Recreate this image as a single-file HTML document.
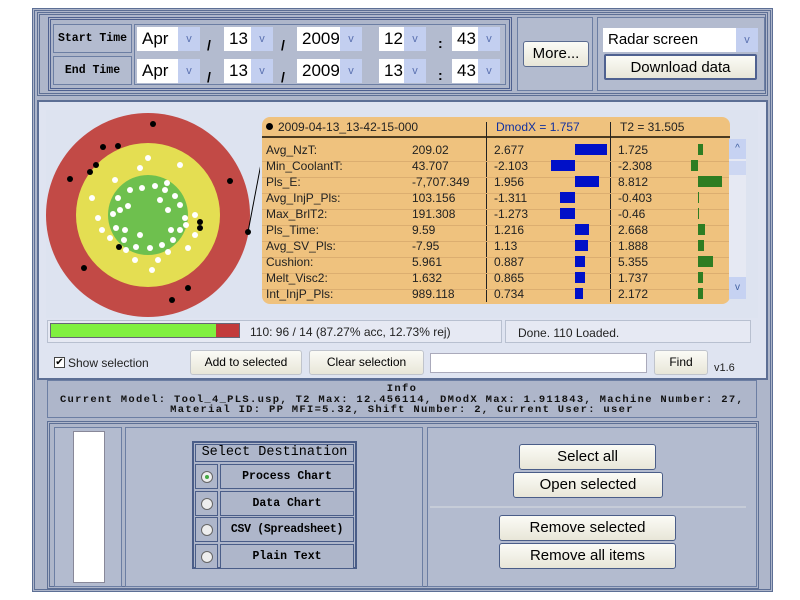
<!DOCTYPE html><html><head><style>
*{box-sizing:border-box;margin:0;padding:0}
body{width:800px;height:600px;background:#fff;position:relative;overflow:hidden;font-family:"Liberation Sans",sans-serif}
.a{position:absolute}
.fr{position:absolute;border:2px solid #5d6f95;background:#aeb6ca}
.in{position:absolute;border:1px solid #6c7ea3;background:#b3bbcf}
.mono{font-family:"Liberation Mono",monospace;font-weight:bold}
.sel{position:absolute;background:#fff;height:24px;font-size:17px;line-height:24px;padding-left:5px;color:#000}
.sel i{position:absolute;right:0;top:0;width:22px;height:24px;background:#c3cff0;font-style:normal;font-size:11px;color:#5a70b0;text-align:center;line-height:24px}
.btn{position:absolute;background:linear-gradient(#fbfbf6,#e8e6d8);border:1px solid #7a879f;border-radius:3px;text-align:center;color:#000}
.row{position:absolute;left:0;width:468px;height:24px;font-size:12px;line-height:24px;color:#222;border-bottom:1px solid #dcae70}
.row span{position:absolute}
.bb{position:absolute;top:6px;height:11px;background:#0010c8}
.gb{position:absolute;top:6px;height:11px;background:#2e7d22}
.rad{position:absolute;border:1px solid #4a5d88;background:#aeb6ca}
.sl{position:absolute;font-size:14px;font-weight:bold}
</style></head><body>
<div class="a" style="left:32px;top:8px;width:741px;height:584px;border:3px double #5d6f95;background:#aeb6ca"></div>
<div class="fr" style="left:37px;top:12px;width:731px;height:84px;border:3px double #5d6f95"></div>
<div class="a" style="left:48px;top:17px;width:464px;height:74px;border:3px double #4f6190;background:#aeb6ca"></div>
<div class="in mono" style="left:53px;top:24px;width:79px;height:29px;font-size:11.5px;line-height:27px;text-align:center;white-space:nowrap">Start Time</div>
<div class="in mono" style="left:53px;top:56px;width:79px;height:29px;font-size:11.5px;line-height:27px;text-align:center">End Time</div>
<div class="in" style="left:134px;top:24px;width:372px;height:61px"></div>
<div class="sel" style="left:137px;top:27px;width:63px">Apr<i>v</i></div>
<div class="sel" style="left:224px;top:27px;width:49px">13<i>v</i></div>
<div class="sel" style="left:297px;top:27px;width:65px">2009<i>v</i></div>
<div class="sel" style="left:379px;top:27px;width:47px">12<i>v</i></div>
<div class="sel" style="left:452px;top:27px;width:48px">43<i>v</i></div>
<div class="sel" style="left:137px;top:59px;width:63px">Apr<i>v</i></div>
<div class="sel" style="left:224px;top:59px;width:49px">13<i>v</i></div>
<div class="sel" style="left:297px;top:59px;width:65px">2009<i>v</i></div>
<div class="sel" style="left:379px;top:59px;width:47px">13<i>v</i></div>
<div class="sel" style="left:452px;top:59px;width:48px">43<i>v</i></div>
<div class="sl" style="left:207px;top:37px">/</div>
<div class="sl" style="left:281px;top:37px">/</div>
<div class="sl" style="left:207px;top:69px">/</div>
<div class="sl" style="left:281px;top:69px">/</div>
<div class="sl" style="left:438px;top:35px">:</div>
<div class="sl" style="left:438px;top:67px">:</div>
<div class="in" style="left:517px;top:17px;width:76px;height:74px"></div>
<div class="btn" style="left:523px;top:41px;width:66px;height:26px;font-size:15px;line-height:24px;border-color:#5a6b90">More...</div>
<div class="in" style="left:597px;top:17px;width:168px;height:74px"></div>
<div class="sel" style="left:603px;top:28px;width:155px;font-size:15px">Radar screen<i>v</i></div>
<div class="btn" style="left:604px;top:54px;width:153px;height:26px;font-size:15px;line-height:24px;border:2px solid #4f6190;border-radius:2px">Download data</div>
<div class="a" style="left:37px;top:100px;width:731px;height:280px;border:2px solid #5d6f95;background:#dfe4f1"></div>
<div class="a" style="left:46px;top:110px;width:712px;height:208px;background:#dde3f0"></div>
<svg class="a" style="left:40px;top:110px" width="220" height="210">
<circle cx="108" cy="105" r="102" fill="#c24a46"/>
<circle cx="108" cy="105" r="72" fill="#e4de52"/>
<circle cx="108" cy="105" r="40" fill="#6ec04e"/>
<g fill="#fff">
<circle cx="78" cy="88" r="3"/><circle cx="90" cy="80" r="3"/><circle cx="102" cy="78" r="3"/><circle cx="115" cy="76" r="3"/><circle cx="125" cy="80" r="3"/><circle cx="135" cy="86" r="3"/><circle cx="140" cy="95" r="3"/><circle cx="145" cy="108" r="3"/><circle cx="140" cy="120" r="3"/><circle cx="133" cy="130" r="3"/><circle cx="122" cy="135" r="3"/><circle cx="110" cy="138" r="3"/><circle cx="96" cy="137" r="3"/><circle cx="84" cy="130" r="3"/><circle cx="76" cy="118" r="3"/><circle cx="73" cy="104" r="3"/><circle cx="80" cy="100" r="3"/><circle cx="128" cy="100" r="3"/><circle cx="58" cy="108" r="3"/><circle cx="52" cy="88" r="3"/><circle cx="75" cy="70" r="3"/><circle cx="108" cy="48" r="3"/><circle cx="140" cy="55" r="3"/><circle cx="155" cy="105" r="3"/><circle cx="155" cy="125" r="3"/><circle cx="100" cy="58" r="3"/><circle cx="118" cy="150" r="3"/><circle cx="95" cy="150" r="3"/><circle cx="85" cy="120" r="3"/><circle cx="128" cy="142" r="3"/><circle cx="148" cy="138" r="3"/><circle cx="70" cy="128" r="3"/><circle cx="112" cy="160" r="3"/><circle cx="120" cy="90" r="3"/><circle cx="88" cy="96" r="3"/><circle cx="100" cy="125" r="3"/><circle cx="146" cy="115" r="3"/><circle cx="131" cy="120" r="3"/><circle cx="127" cy="73" r="3"/><circle cx="86" cy="140" r="3"/><circle cx="62" cy="120" r="3"/>
</g>
<g fill="#000">
<circle cx="113" cy="14" r="3"/><circle cx="63" cy="37" r="3"/><circle cx="78" cy="36" r="3"/><circle cx="56" cy="55" r="3"/><circle cx="50" cy="62" r="3"/><circle cx="30" cy="69" r="3"/><circle cx="190" cy="71" r="3"/><circle cx="160" cy="112" r="3"/><circle cx="160" cy="118" r="3"/><circle cx="208" cy="122" r="3"/><circle cx="79" cy="137" r="3"/><circle cx="44" cy="158" r="3"/><circle cx="148" cy="178" r="3"/><circle cx="132" cy="190" r="3"/>
</g>
<line x1="208" y1="122" x2="228" y2="17" stroke="#000" stroke-width="1"/>
</svg>
<div class="a" style="left:262px;top:117px;width:468px;height:187px;background:#efc27e;border-radius:8px">
<div class="a" style="left:4px;top:6px;width:7px;height:7px;border-radius:50%;background:#000"></div>
<div class="a" style="left:16px;top:3px;font-size:12px;color:#222">2009-04-13_13-42-15-000</div>
<div class="a" style="left:234px;top:3px;font-size:12px;color:#1030a0">DmodX = 1.757</div>
<div class="a" style="left:358px;top:3px;font-size:12px;color:#222">T2 = 31.505</div>
<div class="a" style="left:0;top:19px;width:468px;height:2px;background:#4a3a20"></div>
<div class="a" style="left:224px;top:5px;width:1px;height:180px;background:#222"></div>
<div class="a" style="left:348px;top:5px;width:1px;height:180px;background:#222"></div>
<div class="a" style="left:0;top:21px;width:468px">
<div class="row" style="top:0"><span style="left:4px">Avg_NzT:</span><span style="left:150px">209.02</span><span style="left:232px">2.677</span><div class="bb" style="left:313px;width:32px"></div><span style="left:356px">1.725</span><div class="gb" style="left:436px;width:5px"></div></div>
<div class="row" style="top:16px"><span style="left:4px">Min_CoolantT:</span><span style="left:150px">43.707</span><span style="left:232px">-2.103</span><div class="bb" style="left:289px;width:24px"></div><span style="left:356px">-2.308</span><div class="gb" style="left:429px;width:7px"></div></div>
<div class="row" style="top:32px"><span style="left:4px">Pls_E:</span><span style="left:150px">-7,707.349</span><span style="left:232px">1.956</span><div class="bb" style="left:313px;width:24px"></div><span style="left:356px">8.812</span><div class="gb" style="left:436px;width:24px"></div></div>
<div class="row" style="top:48px"><span style="left:4px">Avg_InjP_Pls:</span><span style="left:150px">103.156</span><span style="left:232px">-1.311</span><div class="bb" style="left:298px;width:15px"></div><span style="left:356px">-0.403</span><div class="gb" style="left:436px;width:1px"></div></div>
<div class="row" style="top:64px"><span style="left:4px">Max_BrlT2:</span><span style="left:150px">191.308</span><span style="left:232px">-1.273</span><div class="bb" style="left:298px;width:15px"></div><span style="left:356px">-0.46</span><div class="gb" style="left:436px;width:1px"></div></div>
<div class="row" style="top:80px"><span style="left:4px">Pls_Time:</span><span style="left:150px">9.59</span><span style="left:232px">1.216</span><div class="bb" style="left:313px;width:14px"></div><span style="left:356px">2.668</span><div class="gb" style="left:436px;width:7px"></div></div>
<div class="row" style="top:96px"><span style="left:4px">Avg_SV_Pls:</span><span style="left:150px">-7.95</span><span style="left:232px">1.13</span><div class="bb" style="left:313px;width:13px"></div><span style="left:356px">1.888</span><div class="gb" style="left:436px;width:6px"></div></div>
<div class="row" style="top:112px"><span style="left:4px">Cushion:</span><span style="left:150px">5.961</span><span style="left:232px">0.887</span><div class="bb" style="left:313px;width:10px"></div><span style="left:356px">5.355</span><div class="gb" style="left:436px;width:15px"></div></div>
<div class="row" style="top:128px"><span style="left:4px">Melt_Visc2:</span><span style="left:150px">1.632</span><span style="left:232px">0.865</span><div class="bb" style="left:313px;width:10px"></div><span style="left:356px">1.737</span><div class="gb" style="left:436px;width:5px"></div></div>
<div class="row" style="top:144px;border:0"><span style="left:4px">Int_InjP_Pls:</span><span style="left:150px">989.118</span><span style="left:232px">0.734</span><div class="bb" style="left:313px;width:8px"></div><span style="left:356px">2.172</span><div class="gb" style="left:436px;width:5px"></div></div>
</div>
<div class="a" style="left:467px;top:22px;width:17px;height:160px;background:#e6e9f3"></div>
<div class="a" style="left:467px;top:22px;width:17px;height:20px;background:#c6d2f2;font-size:10px;color:#4060a0;text-align:center;line-height:20px">^</div>
<div class="a" style="left:467px;top:44px;width:17px;height:14px;background:#cdd7f2"></div>
<div class="a" style="left:467px;top:160px;width:17px;height:22px;background:#c6d2f2;font-size:10px;color:#4060a0;text-align:center;line-height:22px">v</div>
</div>
<div class="a" style="left:47px;top:320px;width:455px;height:23px;border:1px solid #b8c0d0;background:#e6e9f3"></div>
<div class="a" style="left:50px;top:323px;width:190px;height:15px;border:1px solid #667;background:#c23b3b"><div style="width:165px;height:13px;background:#80f040"></div></div>
<div class="a" style="left:250px;top:325px;font-size:12px;color:#222">110: 96 / 14 (87.27% acc, 12.73% rej)</div>
<div class="a" style="left:505px;top:320px;width:246px;height:23px;border:1px solid #b8c0d0;background:#e6e9f3;font-size:12px;color:#222;padding:5px 0 0 12px">Done. 110 Loaded.</div>
<div class="a" style="left:54px;top:357px;width:11px;height:11px;border:1px solid #444;background:#fff;font-size:10px;line-height:9px;text-align:center">✔</div>
<div class="a" style="left:68px;top:356px;font-size:12px;color:#222">Show selection</div>
<div class="btn" style="left:190px;top:350px;width:112px;height:25px;font-size:12px;line-height:23px;border-color:#c0c4cc">Add to selected</div>
<div class="btn" style="left:309px;top:350px;width:115px;height:25px;font-size:12px;line-height:23px;border-color:#c0c4cc">Clear selection</div>
<div class="a" style="left:430px;top:353px;width:217px;height:20px;background:#fff;border:1px solid #aab"></div>
<div class="btn" style="left:654px;top:350px;width:54px;height:25px;font-size:12px;line-height:23px;border-color:#c0c4cc">Find</div>
<div class="a" style="left:714px;top:362px;font-size:11px;color:#222">v1.6</div>
<div class="a mono" style="left:47px;top:380px;width:710px;height:38px;border:1px solid #6c7ea3;background:#aeb6ca;font-size:10.5px;line-height:10.5px;text-align:center;padding-top:3px;color:#111;white-space:nowrap;letter-spacing:1.3px">Info<br>Current Model: Tool_4_PLS.usp, T2 Max: 12.456114, DModX Max: 1.911843, Machine Number: 27,<br>Material ID: PP MFI=5.32, Shift Number: 2, Current User: user</div>
<div class="a" style="left:47px;top:421px;width:712px;height:168px;border:3px double #5d6f95;background:#aeb6ca"></div>
<div class="in" style="left:54px;top:427px;width:68px;height:160px"></div>
<div class="a" style="left:73px;top:431px;width:32px;height:152px;background:#fff;border:1px solid #889"></div>
<div class="in" style="left:125px;top:427px;width:298px;height:160px"></div>
<div class="in" style="left:427px;top:427px;width:330px;height:160px"></div>
<div class="a" style="left:192px;top:441px;width:165px;height:128px;border:2px solid #4a5d88;background:#aeb6ca"></div>
<div class="rad mono" style="left:195px;top:444px;width:159px;height:18px;font-size:13.5px;font-weight:normal;text-align:center;line-height:16px;white-space:nowrap">Select Destination</div>
<div class="rad" style="left:195px;top:464px;width:23px;height:25px"></div><div class="rad mono" style="left:220px;top:464px;width:134px;height:25px;font-size:11.5px;text-align:center;line-height:23px">Process Chart</div>
<div class="rad" style="left:195px;top:491px;width:23px;height:25px"></div><div class="rad mono" style="left:220px;top:491px;width:134px;height:25px;font-size:11.5px;text-align:center;line-height:23px">Data Chart</div>
<div class="rad" style="left:195px;top:517px;width:23px;height:25px"></div><div class="rad mono" style="left:220px;top:517px;width:134px;height:25px;font-size:11.5px;text-align:center;line-height:23px;white-space:nowrap;letter-spacing:-0.3px">CSV (Spreadsheet)</div>
<div class="rad" style="left:195px;top:544px;width:23px;height:25px"></div><div class="rad mono" style="left:220px;top:544px;width:134px;height:25px;font-size:11.5px;text-align:center;line-height:23px">Plain Text</div>
<div class="a" style="left:201px;top:471px;width:12px;height:12px;border-radius:50%;border:1px solid #666;background:#eee"><div style="margin:3px;width:4px;height:4px;border-radius:50%;background:#4a4"></div></div>
<div class="a" style="left:201px;top:498px;width:12px;height:12px;border-radius:50%;border:1px solid #666;background:#eee"></div>
<div class="a" style="left:201px;top:524px;width:12px;height:12px;border-radius:50%;border:1px solid #666;background:#eee"></div>
<div class="a" style="left:201px;top:551px;width:12px;height:12px;border-radius:50%;border:1px solid #666;background:#eee"></div>
<div class="btn" style="left:519px;top:444px;width:137px;height:26px;font-size:15px;line-height:24px;border-color:#4a5d88">Select all</div>
<div class="btn" style="left:513px;top:472px;width:150px;height:26px;font-size:15px;line-height:24px;border-color:#4a5d88">Open selected</div>
<div class="a" style="left:430px;top:506px;width:316px;height:2px;background:#c6ccd8"></div>
<div class="btn" style="left:499px;top:515px;width:177px;height:26px;font-size:15px;line-height:24px;border-color:#4a5d88">Remove selected</div>
<div class="btn" style="left:499px;top:543px;width:177px;height:26px;font-size:15px;line-height:24px;border-color:#4a5d88">Remove all items</div>
</body></html>
